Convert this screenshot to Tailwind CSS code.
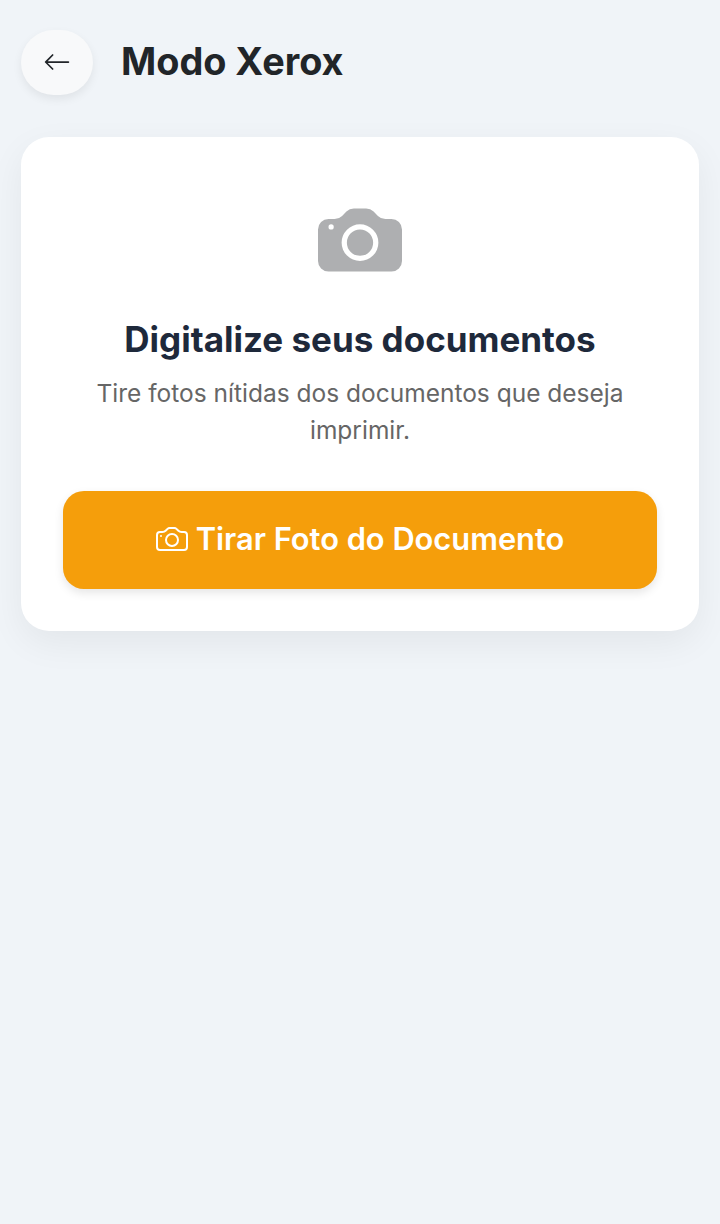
<!DOCTYPE html>
<html lang="pt-BR">
<head>
  <meta charset="UTF-8">
  <meta name="viewport" content="width=device-width, initial-scale=1.0">
  <title>Modo Xerox</title>
  <script src="https://cdn.jsdelivr.net/npm/@tailwindcss/browser@4"></script>
</head>
<body class="bg-[#f0f4f8] font-['Inter',sans-serif] min-h-[1224px]">
  <!-- cabeçalho -->
  <header class="flex items-center gap-[28px] px-[21px] pt-[30px]">
    <button class="w-[72px] h-[65px] rounded-full bg-[#f8f9fa] shadow-[0_4px_10px_rgba(0,0,0,0.07)] flex items-center justify-center text-[#212529] pb-[1px]">
      <svg class="w-[28px] h-[28px]" viewBox="0 0 16 16" fill="currentColor"><path fill-rule="evenodd" d="M15 8a.5.5 0 0 0-.5-.5H2.707l3.147-3.146a.5.5 0 1 0-.708-.708l-4 4a.5.5 0 0 0 0 .708l4 4a.5.5 0 0 0 .708-.708L2.707 8.5H14.5A.5.5 0 0 0 15 8z"/></svg>
    </button>
    <h1 class="text-[37.8px] leading-[44px] font-bold text-[#212529] pb-[3px]">Modo Xerox</h1>
  </header>

  <main class="px-[21px] mt-[42px]">
    <div class="bg-white rounded-[28px] shadow-[0_12px_36px_rgba(0,0,0,0.06)] px-[42px] pt-[61px] pb-[42px] flex flex-col items-center text-center">
      <svg class="w-[84px] h-[84px] text-[#212529] opacity-[0.36]" viewBox="0 0 16 16" fill="currentColor"><path d="M10.5 8.5a2.5 2.5 0 1 1-5 0 2.5 2.5 0 0 1 5 0z"/><path d="M2 4a2 2 0 0 0-2 2v6a2 2 0 0 0 2 2h12a2 2 0 0 0 2-2V6a2 2 0 0 0-2-2h-1.172a2 2 0 0 1-1.414-.586l-.828-.828A2 2 0 0 0 9.172 2H6.828a2 2 0 0 0-1.414.586l-.828.828A2 2 0 0 1 3.172 4H2zm.5 2a.5.5 0 1 1 0-1 .5.5 0 0 1 0 1zm9 2.5a3.5 3.5 0 1 1-7 0 3.5 3.5 0 0 1 7 0z"/></svg>
      <h2 class="mt-[35px] text-[35px] leading-[44px] font-bold text-[#1e293b]">Digitalize seus documentos</h2>
      <p class="mt-[14px] text-[24.5px] leading-[37px] text-[#666666]">Tire fotos nítidas dos documentos que deseja imprimir.</p>
      <button class="mt-[42px] w-full h-[98px] pb-[2px] rounded-[21px] bg-[#f59e0b] shadow-[0_4px_10px_rgba(0,0,0,0.1)] flex items-center justify-center gap-[8px] text-white text-[30.8px] font-semibold">
        <svg class="w-[32px] h-[32px]" viewBox="0 0 16 16" fill="currentColor"><path d="M15 12a1 1 0 0 1-1 1H2a1 1 0 0 1-1-1V6a1 1 0 0 1 1-1h1.172a3 3 0 0 0 2.12-.879l.83-.828A1 1 0 0 1 6.827 3h2.344a1 1 0 0 1 .707.293l.828.828A3 3 0 0 0 12.828 5H14a1 1 0 0 1 1 1v6zM2 4a2 2 0 0 0-2 2v6a2 2 0 0 0 2 2h12a2 2 0 0 0 2-2V6a2 2 0 0 0-2-2h-1.172a2 2 0 0 1-1.414-.586l-.828-.828A2 2 0 0 0 9.172 2H6.828a2 2 0 0 0-1.414.586l-.828.828A2 2 0 0 1 3.172 4H2z"/><path d="M8 11a2.5 2.5 0 1 1 0-5 2.5 2.5 0 0 1 0 5zm0 1a3.5 3.5 0 1 0 0-7 3.5 3.5 0 0 0 0 7zM3 6.5a.5.5 0 1 1-1 0 .5.5 0 0 1 1 0z"/></svg>
        <span>Tirar Foto do Documento</span>
      </button>
    </div>
  </main>
</body>
</html>
